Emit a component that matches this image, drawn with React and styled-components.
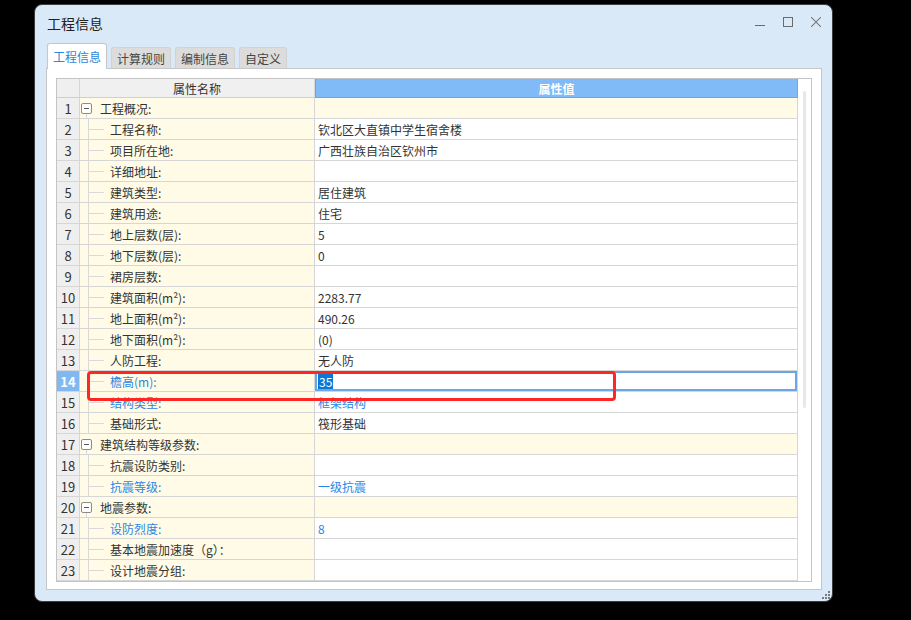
import React from "react";
import styled, { createGlobalStyle } from "styled-components";

const rows = [
  { no: 1, name: "工程概况:", group: true },
  { no: 2, name: "工程名称:", value: "钦北区大直镇中学生宿舍楼" },
  { no: 3, name: "项目所在地:", value: "广西壮族自治区钦州市" },
  { no: 4, name: "详细地址:", value: "" },
  { no: 5, name: "建筑类型:", value: "居住建筑" },
  { no: 6, name: "建筑用途:", value: "住宅" },
  { no: 7, name: "地上层数(层):", value: "5" },
  { no: 8, name: "地下层数(层):", value: "0" },
  { no: 9, name: "裙房层数:", value: "" },
  { no: 10, name: "建筑面积(m²):", value: "2283.77" },
  { no: 11, name: "地上面积(m²):", value: "490.26" },
  { no: 12, name: "地下面积(m²):", value: "(0)" },
  { no: 13, name: "人防工程:", value: "无人防" },
  { no: 14, name: "檐高(m):", value: "35", blue: true, editing: true },
  { no: 15, name: "结构类型:", value: "框架结构", blue: true },
  { no: 16, name: "基础形式:", value: "筏形基础" },
  { no: 17, name: "建筑结构等级参数:", group: true },
  { no: 18, name: "抗震设防类别:", value: "" },
  { no: 19, name: "抗震等级:", value: "一级抗震", blue: true },
  { no: 20, name: "地震参数:", group: true },
  { no: 21, name: "设防烈度:", value: "8", blue: true },
  { no: 22, name: "基本地震加速度（g）：", value: "" },
  { no: 23, name: "设计地震分组:", value: "" },
];

const tabs = ["工程信息", "计算规则", "编制信息", "自定义"];

const App = () => {
  return (
    <Screen>
      <GlobalStyle />
      <Window>
        <TitleBar>
          <Title>工程信息</Title>
          <Controls>
            <svg width="10" height="10" viewBox="0 0 10 10">
              <path d="M0 8.5h10" stroke="#6b6b6b" strokeWidth="1" />
            </svg>
            <svg width="10" height="10" viewBox="0 0 10 10">
              <rect x="0.5" y="0.5" width="9" height="9" fill="none" stroke="#6b6b6b" />
            </svg>
            <svg width="10" height="10" viewBox="0 0 10 10">
              <path d="M0 0L10 10M10 0L0 10" stroke="#7a7a7a" strokeWidth="1.1" />
            </svg>
          </Controls>
        </TitleBar>
        <TabRow>
          {tabs.map((t, i) => (
            <Tab key={t} $active={i === 0}>
              {t}
            </Tab>
          ))}
        </TabRow>
        <Panel>
          <Grid>
            <Table>
              <HeadNo />
              <HeadName>属性名称</HeadName>
              <HeadValue>属性值</HeadValue>
              {rows.map((r) => (
                <React.Fragment key={r.no}>
                  <NoCell $selected={r.editing}>{r.no}</NoCell>
                  <NameCell $blue={r.blue}>
                    {r.group ? (
                      <>
                        <Toggle />
                        <GroupText>{r.name}</GroupText>
                      </>
                    ) : (
                      <>
                        <Guide />
                        <ChildText>{r.name}</ChildText>
                      </>
                    )}
                  </NameCell>
                  <ValueCell $group={r.group} $blue={r.blue} $editing={r.editing}>
                    {r.editing ? <Selected>{r.value}</Selected> : r.value}
                  </ValueCell>
                </React.Fragment>
              ))}
            </Table>
            <ScrollTrack>
              <Thumb />
            </ScrollTrack>
          </Grid>
        </Panel>
        <Footer>
          <svg width="9" height="9" viewBox="0 0 9 9">
            <g fill="#7c7c7c">
              <rect x="6" y="0" width="2" height="2" />
              <rect x="3" y="3" width="2" height="2" />
              <rect x="6" y="3" width="2" height="2" />
              <rect x="0" y="6" width="2" height="2" />
              <rect x="3" y="6" width="2" height="2" />
              <rect x="6" y="6" width="2" height="2" />
            </g>
          </svg>
        </Footer>
      </Window>
      <Annotation />
    </Screen>
  );
};

export default App;

const GlobalStyle = createGlobalStyle`
  html, body {
    margin: 0;
    background: #000;
  }
  body {
    font-family: "Noto Sans CJK SC", "Noto Sans", sans-serif;
    color: #333;
  }
`;

const Screen = styled.div`
  position: relative;
  width: 911px;
  height: 620px;
  padding: 4px 0 0 34px;
  box-sizing: border-box;
`;

const Window = styled.div`
  width: 799px;
  height: 598px;
  box-sizing: border-box;
  background: #d9e9f7;
  border: 1px solid #3c3c3c;
  border-radius: 8px;
  display: flex;
  flex-direction: column;
`;

const TitleBar = styled.div`
  height: 38px;
  display: flex;
  align-items: center;
  justify-content: space-between;
  padding: 0 11px 0 12px;
`;

const Title = styled.div`
  font-size: 14px;
  color: #222;
  margin-top: -2px;
`;

const Controls = styled.div`
  display: flex;
  gap: 18px;
  margin-top: -4px;
  svg {
    display: block;
  }
`;

const TabRow = styled.div`
  height: 25px;
  display: flex;
  align-items: flex-end;
  gap: 4px;
  padding-left: 12px;
`;

const Tab = styled.div`
  position: relative;
  z-index: 1;
  box-sizing: border-box;
  padding: 0 5px;
  font-size: 12px;
  display: flex;
  align-items: center;
  border-radius: 3px 3px 0 0;
  height: ${(p) => (p.$active ? "26px" : "21px")};
  margin-bottom: ${(p) => (p.$active ? "-1px" : "0")};
  background: ${(p) => (p.$active ? "#fff" : "#dcdcdc")};
  color: ${(p) => (p.$active ? "#2c86d9" : "#444")};
  border: 1px solid ${(p) => (p.$active ? "#c6c6c6" : "#d2d2d2")};
  border-bottom: none;
`;

const Panel = styled.div`
  margin-left: 11px;
  width: 776px;
  height: 522px;
  box-sizing: border-box;
  background: #fff;
  border: 1px solid #c6c6c6;
  padding: 9px 9px 8px 9px;
`;

const Grid = styled.div`
  height: 504px;
  box-sizing: border-box;
  border: 1px solid #c4c4c4;
  display: flex;
`;

const Table = styled.div`
  flex: 1;
  display: grid;
  grid-template-columns: 23px 235px 1fr;
  grid-template-rows: 19px repeat(23, 21px);
  font-size: 12px;
`;

const Cell = styled.div`
  box-sizing: border-box;
  border-right: 1px solid #d6d6d6;
  border-bottom: 1px solid #d6d6d6;
  display: flex;
  align-items: center;
  white-space: nowrap;
  overflow: hidden;
`;

const HeadNo = styled(Cell)`
  background: #efefef;
  border-bottom-color: #cfcfcf;
`;

const HeadName = styled(Cell)`
  background: #f0f0f0;
  justify-content: center;
  color: #333;
  border-bottom-color: #cfcfcf;
`;

const HeadValue = styled(Cell)`
  background: #80bbf7;
  justify-content: center;
  color: #fff;
  font-weight: bold;
  border: 1px solid #67a7ee;
  border-top: none;
`;

const NoCell = styled(Cell)`
  justify-content: center;
  font-size: 13px;
  background: ${(p) => (p.$selected ? "#80b8f2" : "#efefef")};
  color: ${(p) => (p.$selected ? "#fff" : "#333")};
  font-weight: ${(p) => (p.$selected ? "bold" : "normal")};
`;

const NameCell = styled(Cell)`
  background: #fffbe6;
  align-items: stretch;
  color: ${(p) => (p.$blue ? "#2a86e6" : "#333")};
`;

const Toggle = styled.span`
  position: relative;
  align-self: center;
  margin-left: 1px;
  width: 11px;
  height: 11px;
  box-sizing: border-box;
  border: 1px solid #8c8c8c;
  border-radius: 2px;
  background: #fff;
  &::before {
    content: "";
    position: absolute;
    left: 2px;
    right: 2px;
    top: 4px;
    height: 1px;
    background: #555;
  }
  &::after {
    content: "";
    position: absolute;
    left: 4px;
    top: 10px;
    width: 1px;
    height: 5px;
    background: #d9d9d9;
  }
`;

const GroupText = styled.span`
  align-self: center;
  margin-left: 8px;
`;

const Guide = styled.span`
  width: 15px;
  margin-left: 8px;
  border-left: 1px solid #d9d9d9;
  background: linear-gradient(#d9d9d9, #d9d9d9) no-repeat left center / 100% 1px;
`;

const ChildText = styled.span`
  align-self: center;
  margin-left: 6px;
`;

const ValueCell = styled(Cell)`
  padding-left: 3px;
  background: ${(p) => (p.$group ? "#fffbe6" : "#fff")};
  color: ${(p) => (p.$blue ? "#2a86e6" : "#333")};
  box-shadow: ${(p) => (p.$editing ? "inset 0 0 0 2px #6ba6e6" : "none")};
`;

const Selected = styled.span`
  background: #0a78d4;
  color: #fff;
  padding: 1px 1px;
  line-height: 13px;
`;

const ScrollTrack = styled.div`
  width: 13px;
  padding-top: 12px;
  box-sizing: border-box;
`;

const Thumb = styled.div`
  width: 3px;
  height: 317px;
  margin-left: 5px;
  border-radius: 2px;
  background: #e8e8e8;
`;

const Footer = styled.div`
  flex: 1;
  display: flex;
  justify-content: flex-end;
  align-items: flex-end;
  padding: 0 1px 1px 0;
  svg {
    display: block;
  }
`;

const Annotation = styled.div`
  position: absolute;
  left: 87px;
  top: 371px;
  width: 529px;
  height: 30px;
  box-sizing: border-box;
  border: 3px solid #ff2626;
  border-radius: 4px;
  pointer-events: none;
`;
